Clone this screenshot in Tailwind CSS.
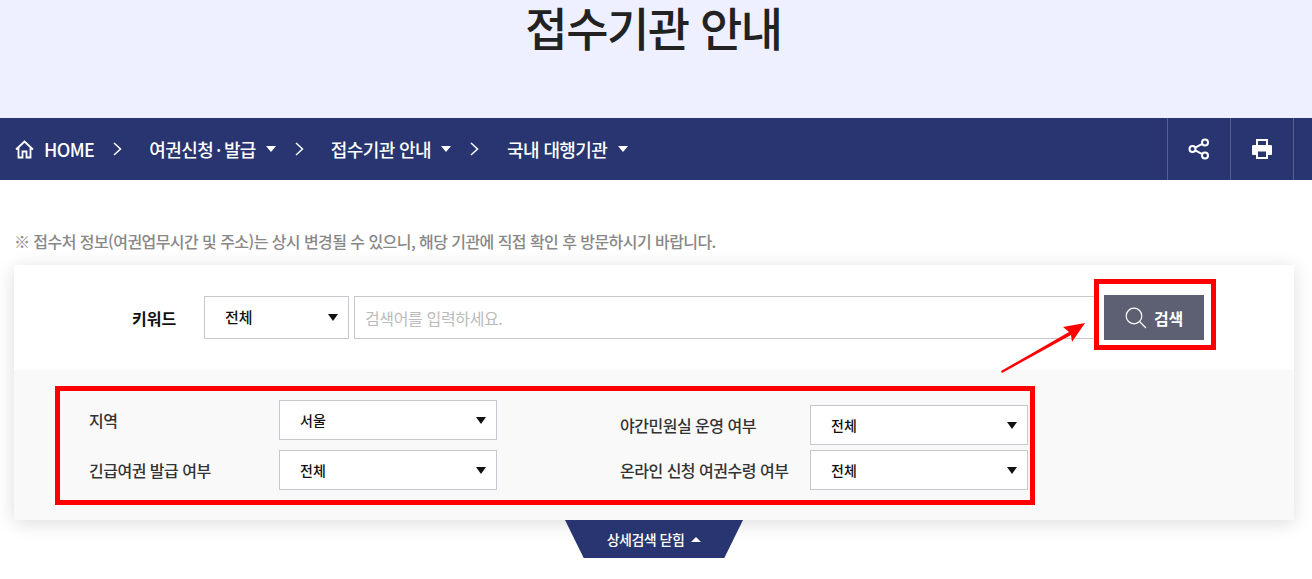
<!DOCTYPE html>
<html lang="ko">
<head>
  <meta charset="UTF-8" />
  <title>접수기관 안내</title>
  <script src="https://cdn.jsdelivr.net/npm/@tailwindcss/browser@4"></script>
</head>
<body class="relative bg-white text-[#222] font-['Noto_Sans_CJK_KR','Noto_Sans',sans-serif]">

  <!-- Title -->
  <header class="h-[118px] bg-[#eef0ff] text-center pr-[5px]">
    <h1 class="text-[46px] leading-[52px] font-medium tracking-[-1.5px] text-[#222]">접수기관 안내</h1>
  </header>

  <!-- Breadcrumb -->
  <nav class="h-[62px] bg-[#283570] text-white flex items-center justify-between">
    <div class="flex items-center pl-[15px] text-[18px] font-medium tracking-[-0.6px]">
      <svg class="w-[19px] h-[19px] mr-[10px]" viewBox="0 0 19 19" fill="none" stroke="currentColor" stroke-width="1.8">
        <path d="M1 9.5 9.5 1.5 18 9.5M3.5 7.5V17.5H7.5V11.5H11.5V17.5H15.5V7.5" />
      </svg>
      <span>HOME</span>
      <svg class="w-[9px] h-[14px] ml-[19px] mr-[27px]" viewBox="0 0 9 14" fill="none" stroke="currentColor" stroke-width="1.5"><path d="M1 1l6.5 6L1 13" /></svg>
      <span>여권신청<span class="mx-[3px]">·</span>발급</span>
      <span class="ml-[10px] w-0 h-0 border-x-[5px] border-x-transparent border-t-[6px] border-t-white"></span>
      <svg class="w-[9px] h-[14px] ml-[19px] mr-[27px]" viewBox="0 0 9 14" fill="none" stroke="currentColor" stroke-width="1.5"><path d="M1 1l6.5 6L1 13" /></svg>
      <span>접수기관 안내</span>
      <span class="ml-[10px] w-0 h-0 border-x-[5px] border-x-transparent border-t-[6px] border-t-white"></span>
      <svg class="w-[9px] h-[14px] ml-[19px] mr-[28px]" viewBox="0 0 9 14" fill="none" stroke="currentColor" stroke-width="1.5"><path d="M1 1l6.5 6L1 13" /></svg>
      <span>국내 대행기관</span>
      <span class="ml-[11px] w-0 h-0 border-x-[5px] border-x-transparent border-t-[6px] border-t-white"></span>
    </div>
    <div class="flex h-full mr-[18px]">
      <button class="w-[63px] h-full flex items-center justify-center border-l border-[#56608c]">
        <svg class="w-[22px] h-[22px]" viewBox="0 0 22 22" fill="none" stroke="currentColor" stroke-width="2">
          <circle cx="4.5" cy="11" r="3" /><circle cx="17" cy="4.5" r="3" /><circle cx="17" cy="17.5" r="3" />
          <path d="M7.2 9.6 14.3 5.9M7.2 12.4 14.3 16.1" />
        </svg>
      </button>
      <button class="w-[64px] h-full flex items-center justify-center border-x border-[#56608c]">
        <svg class="w-[22px] h-[22px]" viewBox="0 0 22 22" fill="none">
          <path fill="#fff" fill-rule="evenodd" d="M5 1h12v6h3a1.5 1.5 0 0 1 1 1.5V16a1 1 0 0 1-1 1h-3v4H5v-4H2a1 1 0 0 1-1-1V8.500A1.500 1.500 0 0 1 2 7h3zM7 3v4h8V3zM7 13.500V19h8v-5.500z" />
        </svg>
      </button>
    </div>
  </nav>

  <main class="pl-[14px]">
    <p class="pt-[50px] text-[16px] leading-[22px] font-medium tracking-[-0.56px] text-[#888]">※ 접수처 정보(여권업무시간 및 주소)는 상시 변경될 수 있으니, 해당 기관에 직접 확인 후 방문하시기 바랍니다.</p>

    <!-- Search card -->
    <section class="mt-[13px] w-[1280px] shadow-[0_3px_18px_rgba(0,0,0,0.14)]">
      <div class="h-[105px] bg-white flex items-start pt-[14px]">
        <span class="mt-[28px] ml-[118px] w-[72px] text-[16px] leading-[22px] font-bold text-[#111]">키워드</span>
        <div class="mt-[17px] w-[145px] h-[43px] border border-[#c5c8cc] flex items-center justify-between pl-[20px] pr-[10px] text-[15px] font-medium text-[#111]">
          전체
          <span class="w-0 h-0 border-x-[5.5px] border-x-transparent border-t-[7px] border-t-[#111]"></span>
        </div>
        <div class="mt-[17px] ml-[5px] w-[740px] h-[43px] border-y border-l border-[#c5c8cc] flex items-center pl-[10px] text-[16px] tracking-[-0.36px] text-[#bbb]">검색어를 입력하세요.</div>
        <div class="w-[122px] h-[71px] border-[5px] border-[#ff0000] pl-[5px] pt-[11px]">
          <button class="w-[100px] h-[45px] bg-[#5c6072] flex items-center justify-center text-white text-[16px] font-bold tracking-[-0.3px]">
            <svg class="w-[22px] h-[22px] mr-[7px]" viewBox="0 0 22 22" fill="none" stroke="currentColor" stroke-width="1.2">
              <circle cx="9" cy="9" r="7.800" /><path d="M14.500 14.500 21 21" />
            </svg>
            검색
          </button>
        </div>
      </div>

      <div class="h-[150px] bg-[#f9f9f9] pt-[16px] pl-[41px]">
        <div class="w-[980px] h-[119px] border-[5px] border-[#ff0000] flex text-[16px] tracking-[-0.5px] font-medium text-[#333]">
          <div class="w-[437px] pt-[9px]">
            <div class="flex items-center h-[40px] pl-[29px]">
              <span class="w-[190px]">지역</span>
              <div class="w-[218px] h-[40px] bg-white border border-[#c5c8cc] flex items-center justify-between pl-[20px] pr-[10px] text-[14px] tracking-normal text-[#111]">서울<span class="w-0 h-0 border-x-[5.5px] border-x-transparent border-t-[7px] border-t-[#111]"></span></div>
            </div>
            <div class="flex items-center h-[40px] mt-[10px] pl-[29px]">
              <span class="w-[190px]">긴급여권 발급 여부</span>
              <div class="w-[218px] h-[40px] bg-white border border-[#c5c8cc] flex items-center justify-between pl-[20px] pr-[10px] text-[14px] tracking-normal text-[#111]">전체<span class="w-0 h-0 border-x-[5.5px] border-x-transparent border-t-[7px] border-t-[#111]"></span></div>
            </div>
          </div>
          <div class="pl-[123px] pt-[14px]">
            <div class="flex items-center h-[40px]">
              <span class="w-[190px]">야간민원실 운영 여부</span>
              <div class="w-[218px] h-[40px] bg-white border border-[#c5c8cc] flex items-center justify-between pl-[20px] pr-[10px] text-[14px] tracking-normal text-[#111]">전체<span class="w-0 h-0 border-x-[5.5px] border-x-transparent border-t-[7px] border-t-[#111]"></span></div>
            </div>
            <div class="flex items-center h-[40px] mt-[5px]">
              <span class="w-[190px]">온라인 신청 여권수령 여부</span>
              <div class="w-[218px] h-[40px] bg-white border border-[#c5c8cc] flex items-center justify-between pl-[20px] pr-[10px] text-[14px] tracking-normal text-[#111]">전체<span class="w-0 h-0 border-x-[5.5px] border-x-transparent border-t-[7px] border-t-[#111]"></span></div>
            </div>
          </div>
        </div>
      </div>
    </section>

    <!-- Toggle tab -->
    <div class="w-[178px] h-[38px] ml-[551px] bg-[#283570] text-white [clip-path:polygon(0_0,100%_0,89.5%_100%,10.5%_100%)] flex items-center justify-center text-[14px] font-medium tracking-[-0.5px]">
      상세검색 닫힘
      <span class="ml-[7px] w-0 h-0 border-x-[5px] border-x-transparent border-b-[5px] border-b-white"></span>
    </div>
  </main>

  <!-- Annotation arrow -->
  <svg class="absolute left-[995px] top-[315px] w-[100px] h-[65px]" viewBox="995 315 100 65">
    <path fill="#ff0000" d="M1085 323 1063 327 1069 332 1001 371 1002 373 1071 335 1072 342z" />
  </svg>
</body>
</html>
